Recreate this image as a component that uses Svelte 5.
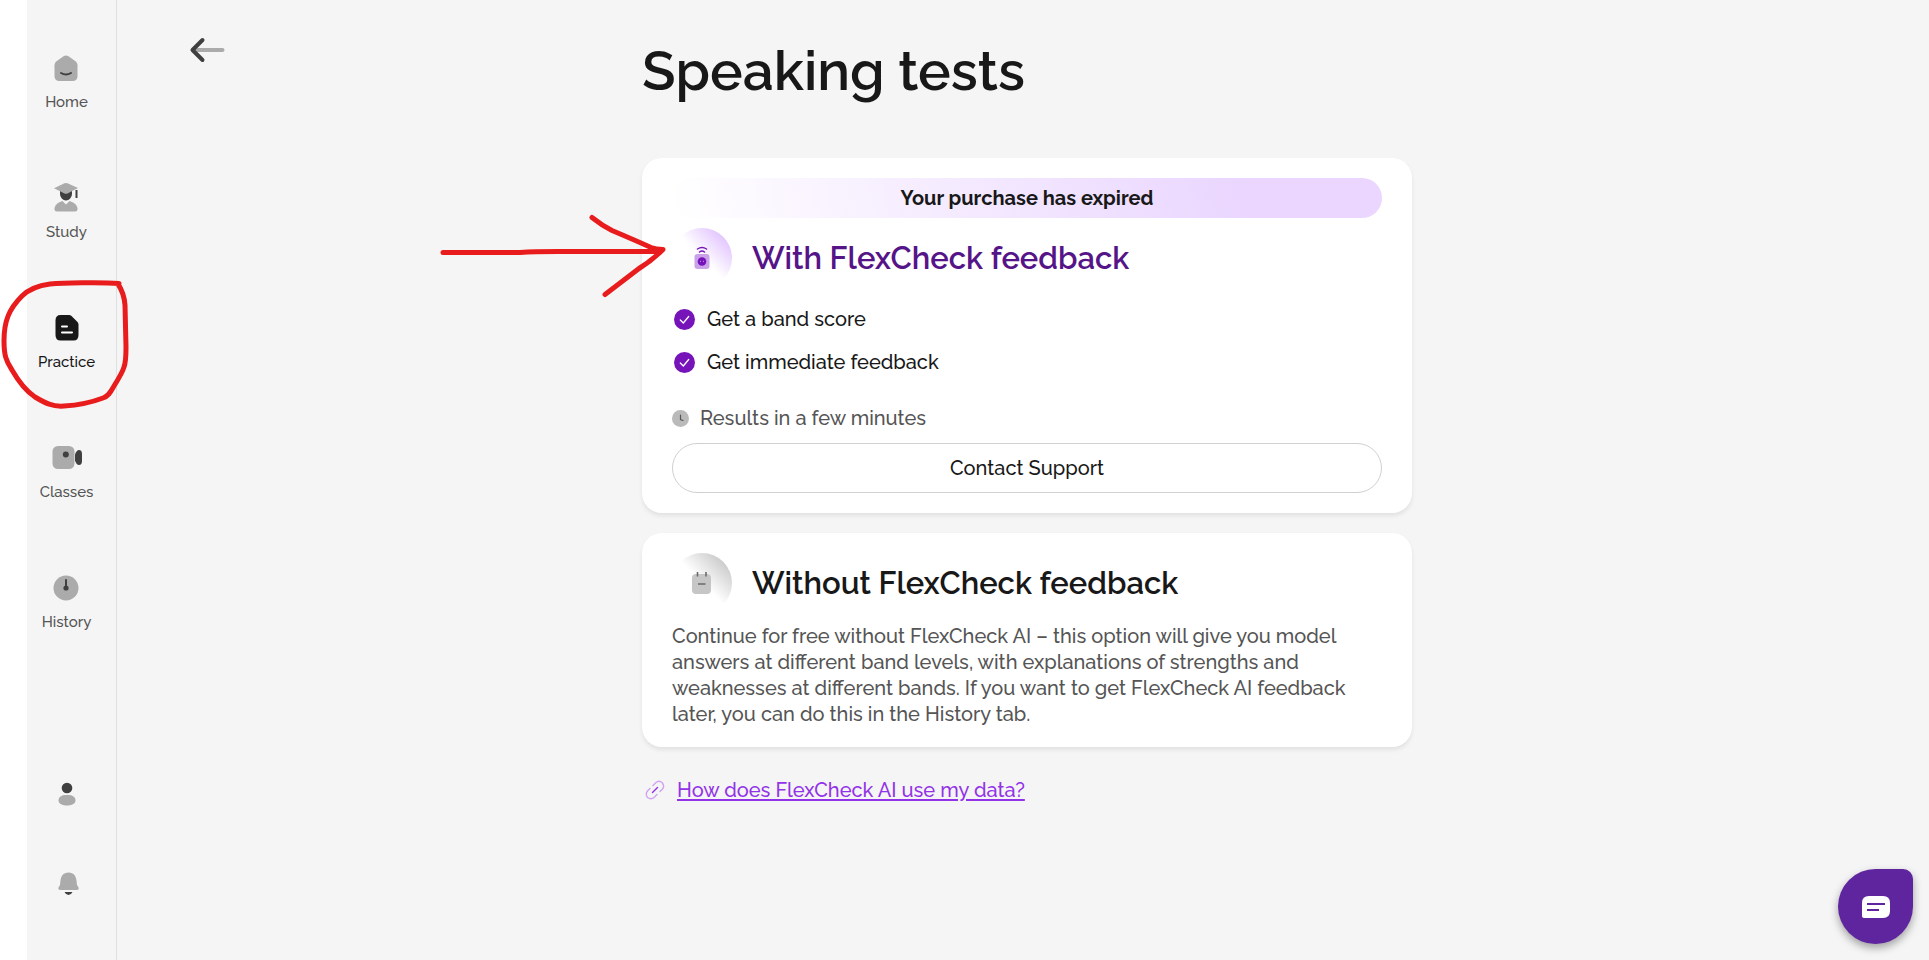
<script>
    const navItems = [
        { name: 'Home', icon: 'home' },
        { name: 'Study', icon: 'study' },
        { name: 'Practice', icon: 'practice' },
        { name: 'Classes', icon: 'classes' },
        { name: 'History', icon: 'history' },
    ];

    const benefits = ['Get a band score', 'Get immediate feedback'];

    let current = $state('Practice');
</script>

<div class="page">
    <nav class="sidebar" aria-label="Main">
        {#each navItems as item}
            <a href="#{item.icon}" class="nav-item" class:active={current === item.name} onclick={() => (current = item.name)}>
                <svg width="32" height="32" viewBox="0 0 32 32" aria-hidden="true">
                    {#if item.icon === 'home'}
                        <path class="soft" d="M13.5 4.3q2.5-1.6 5 0l7 5q2 1.5 2 4V24q0 5-5 5H9.500q-5 0-5-5V13.300q0-2.500 2-4z" />
                        <path class="line" d="M11 21q5 3 10 0" />
                    {:else if item.icon === 'study'}
                        <path class="dark" d="M10 8h12v4a6 6.500 0 0 1-12 0zM25.500 8h2v8h-2z" />
                        <path class="soft" d="M14.500 1.300q1.500-.6 3 0L28 6l-10.500 5.500q-1.500.6-3 0L4 6.300z" />
                        <path class="soft" d="M4.500 27v-1q1-5 8-7l3.500 3.500L19.500 19q7 2 8 7v1q0 2.500-2.500 2.500H7Q4.500 29.500 4.500 27z" />
                    {:else if item.icon === 'practice'}
                        <path class="strong" d="M9.500 3H18q1.500 0 2.500 1l6 6q1 1 1 2.500V23q0 5.500-5 5.500h-13q-5 0-5-5.500V8.500Q4.500 3 9.500 3z" />
                        <path class="mark" d="M11 14.500h5M11 20.500h10" />
                    {:else if item.icon === 'classes'}
                        <rect class="soft" x="1.500" y="4" width="22" height="23" rx="5.500" />
                        <circle class="dark" cx="14.800" cy="12.500" r="3" />
                        <path class="dark" d="M24 12.500q1.500-4.500 4-4.500 3 0 3 4v7q0 4-3 4-2.500 0-4-4.500z" />
                    {:else}
                        <circle class="soft" cx="16" cy="16" r="12.500" />
                        <circle class="dark" cx="16" cy="16" r="2.600" />
                        <path class="line" d="M16 8v8" />
                    {/if}
                </svg>
                <span>{item.name}</span>
            </a>
        {/each}

        <div class="account">
            <button aria-label="Profile">
                <svg width="32" height="32" viewBox="0 0 32 32" aria-hidden="true">
                    <circle class="dark" cx="16" cy="10" r="5.300" />
                    <rect class="soft" x="7.500" y="17" width="17" height="10.500" rx="7" ry="5" />
                </svg>
            </button>
            <button aria-label="Notifications">
                <svg width="32" height="32" viewBox="0 0 32 32" aria-hidden="true">
                    <path class="soft" d="M17.500 4.500c5 0 7.600 3.600 8 8l.5 4.500 1.500 2.500q.8 2.500-2 2.500h-16q-2.800 0-2-2.500L9 17l.5-4.500c.4-4.400 3-8 8-8z" />
                    <path class="dark" d="M13.500 24h8q-1.500 3-4 3t-4-3z" />
                </svg>
            </button>
        </div>

        <svg class="scribble" width="134" height="134" viewBox="0 0 134 134" aria-hidden="true">
            <path d="M119 8.500C100 7 62 8 50 9 35 11 28 15 22 21 9 34 4 46 4 66c0 14 2 20 8 29 8 14 14 21 23 27 10 6 18 10 29 9 17-1 26-3 39-8 6-2 8-7 11-12 5-8 9-15 10-19 2-5 2-12 2-20l-1-42q-1-12-7-21" />
        </svg>
    </nav>

    <main>
        <a class="back" href="#back" aria-label="Back">
            <svg width="36" height="26" viewBox="0 0 36 26" aria-hidden="true">
                <path d="M5 13h28.500" stroke="#ababab" />
                <path d="M13.500 3 3.500 13l10 10" stroke="#404040" />
            </svg>
        </a>

        <div class="column">
            <h1>Speaking tests</h1>

            <section class="card">
                <p class="banner">Your purchase has expired</p>
                <div class="card-title purple">
                    <span class="badge">
                        <svg width="24" height="24" viewBox="0 0 24 24" aria-hidden="true">
                            <rect x="4.500" y="8" width="15" height="15" rx="3" fill="#c9a2e8" />
                            <circle cx="12" cy="15.500" r="4.300" fill="#7614ba" />
                            <path d="M10.500 14.800v1M13.500 14.800v1" stroke="#c9a2e8" stroke-width="1" />
                            <path d="M7.500 3q4.500-3.200 9 0M9.500 6q2.500-1.800 5 0" fill="none" stroke="#7614ba" stroke-width="1.500" stroke-linecap="round" />
                        </svg>
                    </span>
                    <h2>With FlexCheck feedback</h2>
                </div>
                <ul>
                    {#each benefits as benefit}
                        <li>
                            <svg width="21" height="21" viewBox="0 0 21 21" aria-hidden="true">
                                <circle cx="10.500" cy="10.500" r="10.500" fill="#7614ba" />
                                <path d="m6.300 11 3 3 5.400-6.500" fill="none" stroke="#fff" stroke-width="1.300" stroke-linecap="round" stroke-linejoin="round" />
                            </svg>
                            {benefit}
                        </li>
                    {/each}
                </ul>
                <p class="timing">
                    <svg width="17" height="17" viewBox="0 0 17 17" aria-hidden="true">
                        <circle cx="8.500" cy="8.500" r="8.500" fill="#bababa" />
                        <path d="M8.500 5v4.500l2.500 1" fill="none" stroke="#555" stroke-width="1.200" stroke-linecap="round" />
                    </svg>
                    Results in a few minutes
                </p>
                <button class="support">Contact Support</button>

                <svg class="arrow" width="230" height="90" viewBox="0 0 230 90" aria-hidden="true">
                    <path d="M5 42.500H82Q95 41.500 120 41.500H222M154 7.500q10 8 20 13 26 11 39 17 5 2 12 2-11 11-24 19l-34 26" />
                </svg>
            </section>

            <section class="card">
                <div class="card-title">
                    <span class="badge grey">
                        <svg width="24" height="24" viewBox="0 0 24 24" aria-hidden="true">
                            <rect x="2" y="3" width="19" height="20" rx="4" fill="#c6c6c6" />
                            <path d="M7.500 1v4.500M16 1v4.500M8 13h7.500" stroke="#6b6b6b" stroke-width="1.600" />
                        </svg>
                    </span>
                    <h2>Without FlexCheck feedback</h2>
                </div>
                <p class="description">
                    Continue for free without FlexCheck AI – this option will give you model answers at different
                    band levels, with explanations of strengths and weaknesses at different bands. If you want to
                    get FlexCheck AI feedback later, you can do this in the History tab.
                </p>
            </section>

            <div class="data-link">
                <svg width="20" height="20" viewBox="0 0 20 20" fill="none" stroke-width="1.400" stroke-linecap="round" aria-hidden="true">
                    <path d="M8 5.500 11 2.500Q14-.2 17 2.500 20 6 17.500 9L15 11.500M5 8.500 2.500 11Q0 14 2.500 17.500 6 20 9 17.500L12 14.500" stroke="#cfa2f2" />
                    <path d="m7.500 12.500 5-5" stroke="#9233e8" />
                </svg>
                <a href="#data">How does FlexCheck AI use my data?</a>
            </div>
        </div>
    </main>

    <button class="chat" aria-label="Open chat">
        <svg width="28" height="22" viewBox="0 0 28 22" aria-hidden="true">
            <path d="M7 0h14q7 0 7 7v8q0 7-7 7H2q-2 0-2-2V7q0-7 7-7z" fill="#fff" />
            <path d="M5 8h18M5 14h12" stroke="#5f259f" stroke-width="2" />
        </svg>
    </button>
</div>

<style>
    :global(body) {
        margin: 0;
        background: #f5f5f5;
    }

    .page {
        display: flex;
        box-sizing: border-box;
        min-height: 100vh;
        border-left: 27px solid #fff;
        color: #181818;
        font-family: Raleway, Lato, sans-serif;
        font-size: 20px;
        font-weight: 500;
        line-height: 26px;
    }

    h1, h2, p, ul {
        margin: 0;
        padding: 0;
    }

    svg {
        flex: none;
        display: block;
    }

    button {
        padding: 0;
        border: none;
        background: none;
        color: inherit;
        font: inherit;
        cursor: pointer;
    }

    .sidebar {
        position: relative;
        display: flex;
        flex: none;
        flex-direction: column;
        align-items: center;
        gap: 70px;
        box-sizing: border-box;
        width: 90px;
        padding: 52px 10px 60px 0;
        border-right: 1px solid #e0e0e0;
    }

    .nav-item {
        display: flex;
        flex-direction: column;
        align-items: center;
        gap: 8px;
        color: #555;
        font-size: 15px;
        line-height: 20px;
        text-decoration: none;
    }

    .nav-item.active {
        color: #181818;
    }

    .account {
        display: flex;
        flex-direction: column;
        gap: 58px;
        margin-top: auto;
    }

    .soft {
        fill: #ababab;
    }

    .dark {
        fill: #404040;
    }

    .strong {
        fill: #181818;
    }

    .line, .mark {
        fill: none;
        stroke: #404040;
        stroke-width: 2;
        stroke-linecap: round;
    }

    .mark {
        stroke: #fff;
    }

    /* hand-drawn highlights */
    .scribble, .arrow {
        position: absolute;
        z-index: 1;
        fill: none;
        stroke: #e81c1c;
        stroke-width: 5;
        stroke-linecap: round;
        stroke-linejoin: round;
        pointer-events: none;
    }

    .scribble {
        top: 275px;
        left: -27px;
    }

    .arrow {
        top: 52px;
        left: -204px;
    }

    main {
        position: relative;
        flex: 1;
        padding: 36px 20px 40px 28px;
    }

    .back {
        position: absolute;
        top: 37px;
        left: 72px;
    }

    .back path {
        fill: none;
        stroke-width: 4;
        stroke-linecap: round;
        stroke-linejoin: round;
    }

    .column {
        max-width: 770px;
        margin: 0 auto;
    }

    h1 {
        margin-bottom: 52px;
        font-size: 55px;
        font-weight: 600;
        line-height: 70px;
    }

    .card {
        position: relative;
        margin-bottom: 20px;
        padding: 20px 30px;
        border-radius: 20px;
        background: #fff;
        box-shadow: 0 3px 4px rgba(0, 0, 0, 0.08);
    }

    .banner {
        margin-bottom: 10px;
        border-radius: 20px;
        background: linear-gradient(75deg, #fff, #ead6ff 80%);
        font-size: 20px;
        font-weight: 700;
        line-height: 40px;
        text-align: center;
    }

    .card-title {
        display: flex;
        align-items: center;
        gap: 20px;
    }

    h2 {
        font-size: 31px;
        font-weight: 600;
        line-height: 40px;
    }

    .purple {
        color: #551589;
    }

    .badge {
        display: flex;
        align-items: center;
        justify-content: center;
        width: 60px;
        height: 60px;
        border-radius: 50%;
        background: linear-gradient(45deg, #fff 50%, #d8b0ff);
    }

    .badge.grey {
        background: linear-gradient(45deg, #fff 50%, #b8b8b8);
    }

    ul {
        display: flex;
        flex-direction: column;
        gap: 17px;
        margin: 18px 0 30px;
        list-style: none;
    }

    li {
        display: flex;
        align-items: center;
        gap: 12px;
        padding-left: 2px;
    }

    .timing {
        display: flex;
        align-items: center;
        gap: 11px;
        margin-bottom: 12px;
        color: #555;
    }

    .support {
        box-sizing: border-box;
        width: 100%;
        height: 50px;
        border: 1px solid #d0d0d0;
        border-radius: 25px;
    }

    .description {
        margin-top: 10px;
        color: #555;
    }

    .data-link {
        display: flex;
        align-items: center;
        gap: 12px;
        margin-top: 30px;
        padding-left: 3px;
    }

    .data-link a {
        color: #9233e8;
        text-decoration-thickness: 2px;
        text-underline-offset: 2px;
    }

    .chat {
        position: fixed;
        right: 16px;
        bottom: 16px;
        display: flex;
        align-items: center;
        justify-content: center;
        width: 75px;
        height: 75px;
        border-radius: 38px 10px 38px 38px;
        background: #5f259f;
        box-shadow: 0 4px 8px rgba(0, 0, 0, 0.35);
    }
</style>
